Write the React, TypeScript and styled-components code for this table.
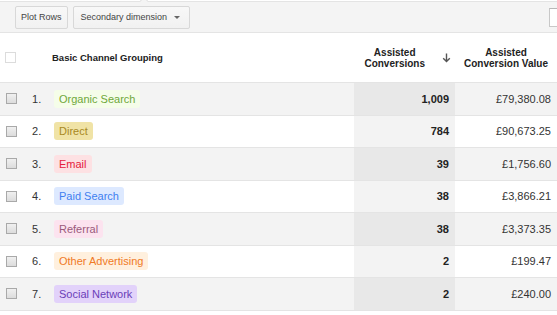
import React from 'react';
import styled, { createGlobalStyle } from 'styled-components';

const Global = createGlobalStyle`
  html, body { margin: 0; padding: 0; background: #fff; overflow: hidden; }
  body { font-family: "Liberation Sans", Arial, sans-serif; }
`;

const Page = styled.div`
  width: 557px;
  height: 315px;
  overflow: hidden;
  background: #fff;
`;

const Toolbar = styled.div`
  position: relative;
  margin-top: 1px;
  height: 32px;
  box-sizing: border-box;
  background: #f4f4f4;
  border-top: 1px solid #e4e4e4;
  border-bottom: 1px solid #e4e4e4;
  display: flex;
  align-items: center;
  padding-left: 15px;
  gap: 5px;
  &::before {
    content: '';
    position: absolute;
    left: 141px;
    top: -4px;
    width: 5px;
    height: 5px;
    background: #f4f4f4;
    border-top: 1px solid #e4e4e4;
    border-left: 1px solid #e4e4e4;
    transform: rotate(45deg);
  }
`;

const Button = styled.button<{ $pl?: number; $pr?: number }>`
  height: 23px;
  box-sizing: border-box;
  border: 1px solid #d8d8d8;
  border-radius: 2px;
  background: linear-gradient(#f8f8f8, #f1f1f1);
  color: #444;
  font-family: "Liberation Sans", Arial, sans-serif;
  font-size: 9px;
  padding: 0 ${(p) => p.$pr ?? 6}px 0 ${(p) => p.$pl ?? 6}px;
  display: flex;
  align-items: center;
  gap: 7px;
`;

const Caret = styled.span`
  width: 0;
  height: 0;
  border-left: 3px solid transparent;
  border-right: 3px solid transparent;
  border-top: 3px solid #666;
`;

const Search = styled.div`
  margin-left: auto;
  margin-right: -92px;
  width: 100px;
  height: 19px;
  box-sizing: border-box;
  border: 1px solid #c8c8c8;
  border-top-color: #b8b8b8;
  background: #fff;
`;

const cols = '28px 26px 1fr 101px 102px';

const Header = styled.div`
  display: grid;
  grid-template-columns: ${cols};
  height: 50px;
  box-sizing: border-box;
  border-bottom: 1px solid #e4e4e4;
  align-items: center;
  color: #222;
  font-weight: bold;
`;

const HeadCheck = styled.span`
  display: block;
  width: 11px;
  height: 11px;
  box-sizing: border-box;
  border: 1px solid #dcdcdc;
  background: #fff;
  margin-left: 5px;
`;

const GroupTitle = styled.div`
  grid-column: 2 / 4;
  padding-left: 24px;
  font-size: 9.5px;
`;

const MetricHead = styled.div<{ $arrow?: boolean }>`
  display: flex;
  align-items: center;
  justify-content: ${(p) => (p.$arrow ? 'flex-end' : 'center')};
  gap: 17px;
  padding-right: ${(p) => (p.$arrow ? 4 : 0)}px;
  font-size: 10px;
  line-height: 11px;
  text-align: center;
`;

const Row = styled.div<{ $odd: boolean }>`
  display: grid;
  grid-template-columns: ${cols};
  height: 32.5px;
  box-sizing: border-box;
  border-bottom: 1px solid #e4e4e4;
  align-items: stretch;
  background: ${(p) => (p.$odd ? '#f3f3f3' : '#fff')};
  font-size: 11px;
  color: #333;
`;

const Cell = styled.div<{ $align?: string; $bg?: string }>`
  display: flex;
  align-items: center;
  justify-content: ${(p) => p.$align ?? 'flex-start'};
  ${(p) => (p.$bg ? `background: ${p.$bg};` : '')}
`;

const Check = styled.span`
  display: block;
  width: 11px;
  height: 11px;
  box-sizing: border-box;
  border: 1px solid #a9a9a9;
  background: linear-gradient(#f0f0f0, #dcdcdc);
  margin-left: 6px;
`;

const Num = styled.span`
  padding-left: 4px;
  color: #333;
`;

const Pill = styled.span<{ $bg: string; $fg: string }>`
  display: inline-flex;
  align-items: center;
  height: 18px;
  padding: 0 5px;
  border-radius: 3px;
  background: ${(p) => p.$bg};
  color: ${(p) => p.$fg};
`;

const Conv = styled.span`
  font-weight: bold;
  color: #222;
  padding-right: 6px;
`;

const Value = styled.span`
  padding-right: 6px;
  color: #333;
`;

const rows = [
  { name: 'Organic Search', bg: '#f5fde9', fg: '#6ea83a', conv: '1,009', val: '£79,380.08' },
  { name: 'Direct', bg: '#f0e3a6', fg: '#a8891f', conv: '784', val: '£90,673.25' },
  { name: 'Email', bg: '#fde1e3', fg: '#e5203c', conv: '39', val: '£1,756.60' },
  { name: 'Paid Search', bg: '#dde9ff', fg: '#3f7ff0', conv: '38', val: '£3,866.21' },
  { name: 'Referral', bg: '#fce3ef', fg: '#9b5a7c', conv: '38', val: '£3,373.35' },
  { name: 'Other Advertising', bg: '#fff0de', fg: '#f07a26', conv: '2', val: '£199.47' },
  { name: 'Social Network', bg: '#e2d2fa', fg: '#6a40b8', conv: '2', val: '£240.00' },
];

const SortArrow = () => (
  <svg width="9" height="10" viewBox="0 0 9 10">
    <path d="M4.5 0.5 V8.5 M1.2 5.3 L4.5 8.6 L7.8 5.3" stroke="#555" strokeWidth="1.4" fill="none" />
  </svg>
);

export default function App() {
  return (
    <Page>
      <Global />
      <Toolbar>
        <Button $pl={5} $pr={5}>Plot Rows</Button>
        <Button $pl={7} $pr={9}>
          Secondary dimension
          <Caret />
        </Button>
        <Search />
      </Toolbar>
      <Header>
        <div>
          <HeadCheck />
        </div>
        <GroupTitle>Basic Channel Grouping</GroupTitle>
        <MetricHead $arrow>
          <span>
            Assisted
            <br />
            Conversions
          </span>
          <SortArrow />
        </MetricHead>
        <MetricHead>
          <span>
            Assisted
            <br />
            Conversion Value
          </span>
        </MetricHead>
      </Header>
      {rows.map((r, i) => {
        const odd = i % 2 === 0;
        return (
          <Row key={r.name} $odd={odd}>
            <Cell>
              <Check />
            </Cell>
            <Cell>
              <Num>{i + 1}.</Num>
            </Cell>
            <Cell>
              <Pill $bg={r.bg} $fg={r.fg}>
                {r.name}
              </Pill>
            </Cell>
            <Cell $align="flex-end" $bg={odd ? '#e8e8e8' : '#f3f3f3'}>
              <Conv>{r.conv}</Conv>
            </Cell>
            <Cell $align="flex-end">
              <Value>{r.val}</Value>
            </Cell>
          </Row>
        );
      })}
    </Page>
  );
}
